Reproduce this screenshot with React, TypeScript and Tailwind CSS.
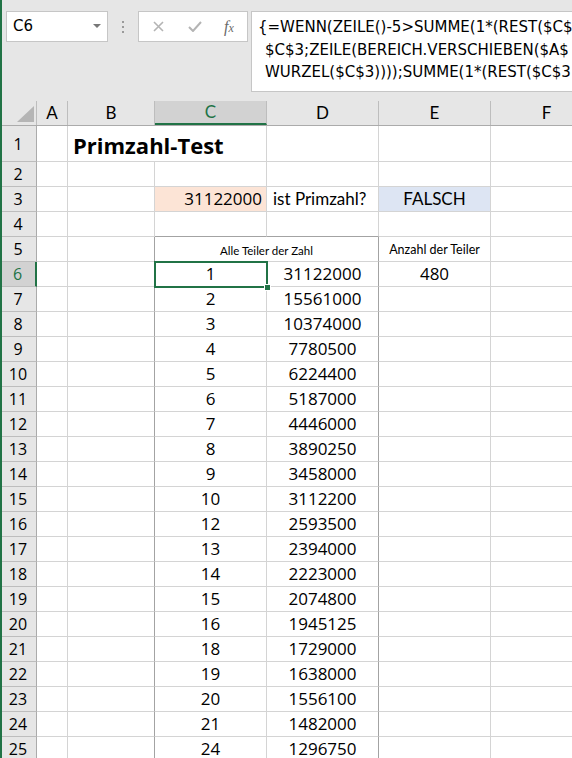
import React from "react";

const green = "#217346";
const grid = "#d4d4d4";
const frame = "#a3a3a3";
const lato = { fontFamily: "Lato, 'Open Sans', sans-serif" };
const nums = { fontFamily: "'Open Sans', Lato, sans-serif" };
const ui = { fontFamily: "'DejaVu Sans', 'Open Sans', sans-serif" };

const colWidths = [31, 87, 112, 112, 112, 112];
const colNames = ["A", "B", "C", "D", "E", "F"];

const divisors: [number, number][] = [
	[1, 31122000],
	[2, 15561000],
	[3, 10374000],
	[4, 7780500],
	[5, 6224400],
	[6, 5187000],
	[7, 4446000],
	[8, 3890250],
	[9, 3458000],
	[10, 3112200],
	[12, 2593500],
	[13, 2394000],
	[14, 2223000],
	[15, 2074800],
	[16, 1945125],
	[18, 1729000],
	[19, 1638000],
	[20, 1556100],
	[21, 1482000],
	[24, 1296750],
];

function RowHeader({ n, h, active }: { n: number; h: number; active?: boolean }) {
	return (
		<div
			className={`flex w-[37px] shrink-0 items-center justify-center border-b text-[16px] ${
				active ? "bg-[#d2d2d2] text-[#217346]" : "bg-[#e6e6e6] text-black"
			}`}
			style={{
				...nums,
				height: h,
				borderBottomColor: "#bdbdbd",
				borderRight: active ? `2px solid ${green}` : "1px solid #ababab",
			}}
		>
			{n}
		</div>
	);
}

type CellProps = {
	w: number;
	h: number;
	children?: React.ReactNode;
	className?: string;
	right?: string | null;
	bottom?: string;
};

function Cell({ w, h, children, className = "", right = grid, bottom = grid }: CellProps) {
	return (
		<div
			className={`relative flex shrink-0 items-center whitespace-nowrap ${className}`}
			style={{
				width: w,
				height: h,
				borderRight: right ? `1px solid ${right}` : "none",
				borderBottom: `1px solid ${bottom}`,
			}}
		>
			{children}
		</div>
	);
}

function Selection() {
	return (
		<div className="pointer-events-none absolute -top-[1px] -left-[1px] z-10 h-[27px] w-[114px] border-2 border-[#217346]">
			<div className="absolute -right-[5px] -bottom-[5px] h-[7px] w-[7px] border border-white bg-[#217346]" />
		</div>
	);
}

export default function App() {
	const rows: React.ReactNode[] = [];

	rows.push(
		<div key="r1" className="flex">
			<RowHeader n={1} h={36} />
			<Cell w={31} h={36} />
			<Cell w={87} h={36} right={null} className="z-10">
				<span className="pl-[5px] pt-[3px] text-[22px] font-bold text-black" style={nums}>
					Primzahl-Test
				</span>
			</Cell>
			<Cell w={112} h={36} />
			<Cell w={112} h={36} />
			<Cell w={112} h={36} />
			<Cell w={112} h={36} />
		</div>,
	);

	for (let r = 2; r <= 25; r++) {
		const inTable = r >= 5;
		const h = 25;
		const bRight = inTable ? frame : grid;
		const rowBottom = r === 4 ? frame : grid;
		let c: React.ReactNode = null;
		let d: React.ReactNode = null;
		let e: React.ReactNode = null;
		let cClass = "";
		let eClass = "";

		if (r === 3) {
			c = (
				<span className="w-full pr-[4px] text-right" style={nums}>
					31122000
				</span>
			);
			d = <span className="pl-[6px]">ist Primzahl?</span>;
			e = <span className="w-full text-center">FALSCH</span>;
			cClass = "bg-[#fce4d6]";
			eClass = "bg-[#dde5f3]";
		}
		if (r >= 6) {
			const [a, b] = divisors[r - 6];
			c = (
				<span className="w-full text-center" style={nums}>
					{a}
				</span>
			);
			d = (
				<span className="w-full text-center" style={nums}>
					{b}
				</span>
			);
		}
		if (r === 6)
			e = (
				<span className="w-full text-center" style={nums}>
					480
				</span>
			);

		rows.push(
			<div key={`r${r}`} className="flex text-[17px] text-black">
				<RowHeader n={r} h={h} active={r === 6} />
				<Cell w={31} h={h} />
				<Cell w={87} h={h} right={bRight} />
				{r === 5 ? (
					<Cell w={224} h={h} right={frame}>
						<span className="w-full pt-[3px] text-center text-[11.5px]">Alle Teiler der Zahl</span>
					</Cell>
				) : (
					<>
						<Cell w={112} h={h} bottom={rowBottom} className={cClass}>
							{c}
							{r === 6 && <Selection />}
						</Cell>
						<Cell w={112} h={h} right={inTable ? frame : grid} bottom={rowBottom}>
							{d}
						</Cell>
					</>
				)}
				<Cell w={112} h={h} className={eClass}>
					{r === 5 ? (
						<span className="w-full pt-[3px] text-center text-[12.5px]">Anzahl der Teiler</span>
					) : (
						e
					)}
				</Cell>
				<Cell w={112} h={h} />
			</div>,
		);
	}

	return (
		<div className="relative h-[758px] w-[572px] overflow-hidden bg-white" style={lato}>
			<div className="absolute top-0 left-0 z-20 h-full w-[2px] bg-[#217346]" />

			{/* formula bar */}
			<div className="relative h-[101px] bg-[#e6e6e6]">
				<div
					className="absolute top-[11px] left-[6px] flex h-[31px] w-[102px] items-center border border-[#c6c6c6] bg-white pl-[6px] text-[15px]"
					style={ui}
				>
					C6
					<svg className="absolute top-[12px] right-[6px]" width="8" height="5" viewBox="0 0 8 5">
						<path d="M0 0H8L4 4Z" fill="#777" />
					</svg>
				</div>
				<div className="absolute top-[21px] left-[122px] flex flex-col gap-[3px]">
					<div className="h-[2px] w-[2px] bg-[#9a9a9a]" />
					<div className="h-[2px] w-[2px] bg-[#9a9a9a]" />
					<div className="h-[2px] w-[2px] bg-[#9a9a9a]" />
				</div>
				<div className="absolute top-[11px] left-[138px] flex h-[31px] w-[110px] items-center border border-[#c6c6c6] bg-white">
					<svg className="absolute top-[9px] left-[14px]" width="11" height="11" viewBox="0 0 11 11">
						<path d="M1 1L10 10M10 1L1 10" stroke="#b4b4b4" strokeWidth="1.6" />
					</svg>
					<svg className="absolute top-[9px] left-[49px]" width="14" height="11" viewBox="0 0 14 11">
						<path d="M1 6L5 10L13 1" stroke="#b4b4b4" strokeWidth="2" fill="none" />
					</svg>
					<span
						className="absolute top-[3px] left-[85px] text-[16px] italic text-[#6a6a6a]"
						style={{ fontFamily: "'Liberation Serif', serif" }}
					>
						f<span className="text-[12px]">x</span>
					</span>
				</div>
				<div
					className="absolute top-[11px] left-[251px] h-[81px] w-[340px] overflow-hidden border border-[#c6c6c6] bg-white pt-[4px] pl-[6px] text-[15px] leading-[22.5px] whitespace-nowrap text-black"
					style={ui}
				>
					<div>{"{=WENN(ZEILE()-5>SUMME(1*(REST($C$"}</div>
					<div className="pl-[7px]">$C$3;ZEILE(BEREICH.VERSCHIEBEN($A$</div>
					<div className="pl-[7px]">WURZEL($C$3))));SUMME(1*(REST($C$3</div>
				</div>
			</div>

			{/* column headers */}
			<div className="flex h-[25px] border-b border-[#ababab] bg-[#e6e6e6]">
				<div className="relative w-[37px] shrink-0 border-r border-[#bdbdbd]">
					<svg className="absolute top-[5px] left-[17px]" width="17" height="16" viewBox="0 0 17 16">
						<path d="M17 0V16H0Z" fill="#b5b5b5" />
					</svg>
				</div>
				{colNames.map((name, i) => (
					<div
						key={name}
						className={`flex shrink-0 items-center justify-center border-r border-[#bdbdbd] text-[17px] ${
							name === "C" ? "border-b-2 border-b-[#217346] bg-[#d2d2d2] text-[#217346]" : "text-black"
						}`}
						style={{ width: colWidths[i] }}
					>
						{name}
					</div>
				))}
			</div>

			{rows}
		</div>
	);
}
